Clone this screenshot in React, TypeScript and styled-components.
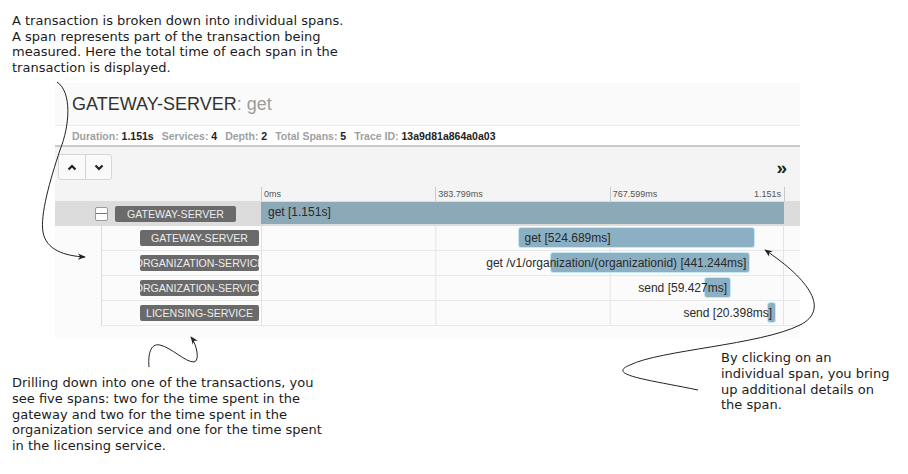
import React from "react";
import styled, { createGlobalStyle } from "styled-components";

const GlobalStyle = createGlobalStyle`
  html, body {
    margin: 0;
    padding: 0;
    background: #fff;
  }
  body {
    font-family: "DejaVu Sans", Verdana, sans-serif;
  }
`;

const TOTAL_MS = 1151;
const SCALE_W = 523;

const Page = styled.div`
  position: relative;
  width: 908px;
  height: 474px;
  overflow: hidden;
  background: #fff;
`;

const Note = styled.p`
  margin: 0;
  font-family: "DejaVu Sans", Verdana, sans-serif;
  font-size: 13px;
  line-height: 15.6px;
  color: #1c1c1c;
  white-space: nowrap;
`;

const TopNote = styled(Note)`
  padding: 13px 0 0 12px;
`;

const BottomNotes = styled.div`
  display: grid;
  grid-template-columns: 709px auto;
  padding-left: 12px;
  align-items: start;
`;

const OffsetNote = styled(Note)<{ $offset: number }>`
  margin-top: ${({ $offset }) => $offset}px;
`;

const Panel = styled.section`
  margin: 8px 0 0 55px;
  width: 745px;
  background: #fbfbfb;
  font-family: "Liberation Sans", Arial, sans-serif;
  padding-bottom: 13px;
`;

const TitleBar = styled.h1`
  margin: 0;
  height: 42px;
  display: flex;
  align-items: center;
  padding: 1px 0 0 17px;
  box-sizing: border-box;
  font-size: 18px;
  font-weight: normal;
  color: #333;
  background: #fafafa;
`;

const Muted = styled.span`
  color: #9d9d9d;
`;

const Summary = styled.div`
  height: 19px;
  display: flex;
  align-items: center;
  gap: 8px;
  padding-left: 17px;
  background: #fff;
  border-top: 1px solid #ececec;
  border-bottom: 2px solid #cacaca;
  font-size: 10.5px;
  font-weight: bold;
  color: #a0a0a0;

  b {
    color: #222;
  }
`;

const Toolbar = styled.div`
  height: 40px;
  display: flex;
  align-items: center;
  justify-content: space-between;
  padding: 0 13px 0 3px;
  background: #f4f4f4;
`;

const ButtonGroup = styled.div`
  display: flex;
  border: 1px solid #d6d6d6;
  border-radius: 3px;
  background: #fafafa;
  overflow: hidden;
`;

const NavButton = styled.button`
  width: 26px;
  height: 24px;
  border: none;
  padding: 0;
  background: transparent;
  display: flex;
  align-items: center;
  justify-content: center;

  & + & {
    border-left: 1px solid #d6d6d6;
  }
`;

const Expand = styled.span`
  font-size: 19px;
  font-weight: bold;
  color: #1f1f1f;
  line-height: 1;
`;

const GridRow = styled.div`
  display: grid;
  grid-template-columns: 206px ${SCALE_W}px 16px;
`;

const TickRow = styled(GridRow)`
  height: 14px;
  background: #f4f4f4;
`;

const Scale = styled.div`
  position: relative;
`;

const Tick = styled.span<{ $at: number }>`
  position: absolute;
  top: 0;
  bottom: 0;
  left: ${({ $at }) => $at}px;
  border-left: 1px solid #c9c9c9;
  padding-left: 2px;
  font-size: 9px;
  line-height: 14px;
  color: #555;
`;

const EndTick = styled.span`
  position: absolute;
  top: 0;
  bottom: 0;
  right: -1px;
  border-right: 1px solid #c9c9c9;
  padding-right: 3px;
  font-size: 9px;
  line-height: 14px;
  color: #555;
`;

const RootRow = styled(GridRow)`
  height: 25px;
  background: #dcdcdc;
`;

const ServiceCell = styled.div<{ $indent: number }>`
  display: flex;
  align-items: center;
  gap: 7px;
  padding-left: ${({ $indent }) => $indent}px;
`;

const Toggle = styled.span`
  position: relative;
  width: 11px;
  height: 12px;
  border: 1px solid #9a9a9a;
  border-radius: 2px;
  background: #fdfdfd;

  &::after {
    content: "";
    position: absolute;
    left: 0;
    right: 0;
    top: 5px;
    border-top: 1px solid #777;
  }
`;

const Badge = styled.span<{ $width: number }>`
  width: ${({ $width }) => $width}px;
  height: 16px;
  display: flex;
  align-items: center;
  justify-content: center;
  overflow: hidden;
  white-space: nowrap;
  border-radius: 2px;
  background: #6a6a6a;
  color: #ececec;
  font-size: 10.6px;
  text-transform: uppercase;
`;

const Timeline = styled.div`
  position: relative;
  background: linear-gradient(90deg, #e3e3e3 1px, transparent 1px) 0 0 /
    ${SCALE_W / 3}px 100% repeat-x;
  border-right: 1px solid #e3e3e3;
`;

const Bar = styled.div<{ $root?: boolean }>`
  position: absolute;
  top: 1px;
  height: ${({ $root }) => ($root ? 22 : 21)}px;
  box-sizing: border-box;
  border-radius: ${({ $root }) => ($root ? 0 : 3)}px;
  background: ${({ $root }) => ($root ? "#8ba9b6" : "#8cb0c3")};
  border: ${({ $root }) => ($root ? "none" : "1px solid #c6e8f6")};
`;

const BarLabel = styled.span<{ $align: "left" | "right" }>`
  position: absolute;
  top: 0;
  ${({ $align }) => ($align === "left" ? "left: 6px;" : "right: 3px;")}
  line-height: 20px;
  font-size: 12px;
  color: #2a2a2a;
  white-space: nowrap;
`;

const ChildGroup = styled.div`
  margin-left: 46px;
  border-left: 1px solid #dcdcdc;
`;

const ChildRow = styled.div`
  display: grid;
  grid-template-columns: 159px ${SCALE_W}px 16px;
  height: 24px;
  border-bottom: 1px solid #e8e8e8;
`;

const Overlay = styled.svg`
  position: absolute;
  inset: 0;
  pointer-events: none;

  path.line {
    fill: none;
    stroke: #222;
    stroke-width: 1;
  }
`;

type Span = {
  service: string;
  name: string;
  start: number;
  duration: number;
  align: "left" | "right";
};

const spans: Span[] = [
  { service: "gateway-server", name: "get", start: 565.6, duration: 524.689, align: "left" },
  { service: "organization-service", name: "get /v1/organization/(organizationid)", start: 638, duration: 441.244, align: "right" },
  { service: "organization-service", name: "send", start: 977, duration: 59.427, align: "right" },
  { service: "licensing-service", name: "send", start: 1115.6, duration: 20.398, align: "right" },
];

const pct = (ms: number) => `${(ms / TOTAL_MS) * 100}%`;

const Chevron = ({ up }: { up?: boolean }) => (
  <svg width="10" height="7" viewBox="0 0 10 7">
    <polyline
      points={up ? "1.5,5.5 5,2 8.5,5.5" : "1.5,1.5 5,5 8.5,1.5"}
      fill="none"
      stroke="#222"
      strokeWidth="2.2"
    />
  </svg>
);

export default function App() {
  return (
    <Page>
      <GlobalStyle />
      <TopNote>
        A transaction is broken down into individual spans.
        <br />
        A span represents part of the transaction being
        <br />
        measured. Here the total time of each span in the
        <br />
        transaction is displayed.
      </TopNote>

      <Panel>
        <TitleBar>
          GATEWAY-SERVER<Muted>: get</Muted>
        </TitleBar>
        <Summary>
          <span>
            Duration: <b>1.151s</b>
          </span>
          <span>
            Services: <b>4</b>
          </span>
          <span>
            Depth: <b>2</b>
          </span>
          <span>
            Total Spans: <b>5</b>
          </span>
          <span>
            Trace ID: <b>13a9d81a864a0a03</b>
          </span>
        </Summary>
        <Toolbar>
          <ButtonGroup>
            <NavButton aria-label="Collapse all">
              <Chevron up />
            </NavButton>
            <NavButton aria-label="Expand all">
              <Chevron />
            </NavButton>
          </ButtonGroup>
          <Expand>»</Expand>
        </Toolbar>
        <TickRow>
          <div />
          <Scale>
            <Tick $at={0}>0ms</Tick>
            <Tick $at={SCALE_W / 3}>383.799ms</Tick>
            <Tick $at={(SCALE_W * 2) / 3}>767.599ms</Tick>
            <EndTick>1.151s</EndTick>
          </Scale>
          <div />
        </TickRow>
        <RootRow>
          <ServiceCell $indent={40}>
            <Toggle />
            <Badge $width={121}>gateway-server</Badge>
          </ServiceCell>
          <Scale>
            <Bar $root style={{ left: 0, width: "100%" }}>
              <BarLabel $align="left" style={{ left: 7, lineHeight: "21px" }}>
                get [1.151s]
              </BarLabel>
            </Bar>
          </Scale>
          <div />
        </RootRow>
        <ChildGroup>
          {spans.map((s, i) => (
            <ChildRow key={i}>
              <ServiceCell $indent={38}>
                <Badge $width={119}>{s.service}</Badge>
              </ServiceCell>
              <Timeline>
                <Bar style={{ left: pct(s.start), width: pct(s.duration) }}>
                  <BarLabel $align={s.align}>
                    {s.name} [{s.duration}ms]
                  </BarLabel>
                </Bar>
              </Timeline>
              <div />
            </ChildRow>
          ))}
        </ChildGroup>
      </Panel>

      <BottomNotes>
        <OffsetNote $offset={36}>
          Drilling down into one of the transactions, you
          <br />
          see five spans: two for the time spent in the
          <br />
          gateway and two for the time spent in the
          <br />
          organization service and one for the time spent
          <br />
          in the licensing service.
        </OffsetNote>
        <OffsetNote $offset={11}>
          By clicking on an
          <br />
          individual span, you bring
          <br />
          up additional details on
          <br />
          the span.
        </OffsetNote>
      </BottomNotes>

      <Overlay width="908" height="474" viewBox="0 0 908 474">
        <defs>
          <marker
            id="head"
            viewBox="0 0 10 10"
            refX="9"
            refY="5"
            markerWidth="8"
            markerHeight="8"
            orient="auto"
          >
            <path d="M0,1 L10,5 L0,9 L3,5 z" fill="#222" />
          </marker>
        </defs>
        <path
          className="line"
          d="M57,82 C72,92 70,125 60,150 C50,180 40,215 43,232 C46,250 65,256 85,257"
          markerEnd="url(#head)"
        />
        <path
          className="line"
          d="M149,367 C148,355 150,343 160,345 C172,348 185,362 194,362 C200,361 197,345 191,337"
          markerEnd="url(#head)"
        />
        <path
          className="line"
          d="M698,390 C650,380 605,375 630,365 C660,350 760,345 800,325 C830,310 810,280 765,250"
          markerEnd="url(#head)"
        />
      </Overlay>
    </Page>
  );
}
